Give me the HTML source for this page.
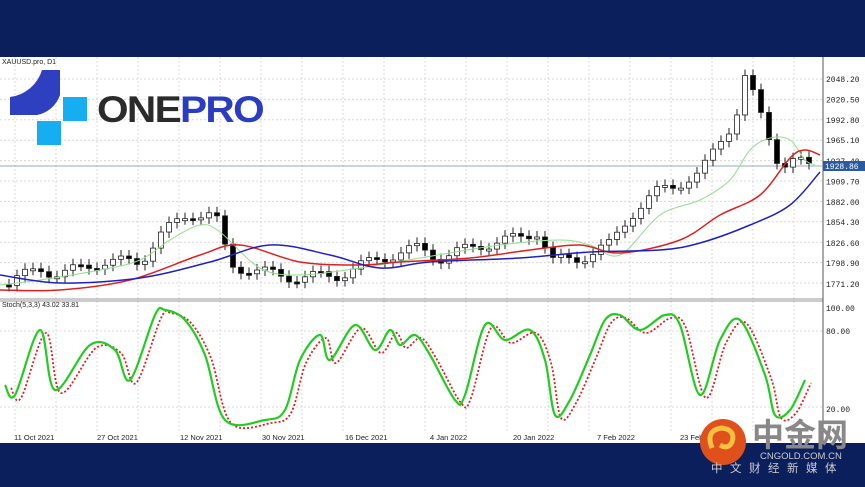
<!DOCTYPE html>
<html><head><meta charset="utf-8"><style>
body{margin:0;width:865px;height:487px;overflow:hidden;background:#0b1f5c;font-family:"Liberation Sans",sans-serif}
svg{position:absolute;left:0;top:0}
</style></head><body>
<svg id="s" width="865" height="487" viewBox="0 0 865 487">
<rect x="0" y="0" width="865" height="57" fill="#0b1f5c"/>
<rect x="0" y="57" width="865" height="386" fill="#fff"/>
<rect x="0" y="443" width="865" height="44" fill="#0b1f5c"/>
<g id="grid" stroke="#d8d8d8" stroke-dasharray="2,2" stroke-width="1"></g>
<line x1="0" y1="299" x2="823" y2="299" stroke="#999"/>
<line x1="0" y1="301" x2="823" y2="301" stroke="#999"/>
<line x1="823" y1="57" x2="823" y2="443" stroke="#555"/>
<line x1="0" y1="166" x2="823" y2="166" stroke="#9ab"/>
<text x="2" y="64" font-size="7" fill="#222">XAUUSD.pro, D1</text>
<text x="2" y="307" font-size="7" fill="#222">Stoch(5,3,3) 43.02 33.81</text>
<g id="c"></g>
<g id="axis" font-size="8" fill="#222" font-family="Liberation Mono,monospace"></g>
<rect x="823" y="161" width="42" height="10" fill="#2a5aa0"/>
<text x="825" y="169" font-size="8" fill="#fff" font-family="Liberation Mono,monospace">1928.86</text>
<g font-size="7.5" fill="#222">
<text x="14" y="440">11 Oct 2021</text><text x="97" y="440">27 Oct 2021</text><text x="180" y="440">12 Nov 2021</text><text x="262" y="440">30 Nov 2021</text><text x="345" y="440">16 Dec 2021</text><text x="430" y="440">4 Jan 2022</text><text x="513" y="440">20 Jan 2022</text><text x="597" y="440">7 Feb 2022</text><text x="680" y="440">23 Feb</text>
</g>
<!-- ONEPRO logo -->
<path d="M60 70 L60 95 A30 30 0 0 1 37 115 L10 115 L10 97 A38 38 0 0 0 42 70 Z" fill="#2e3fbf"/>
<rect x="63" y="97" width="24" height="24" fill="#16aef0"/>
<rect x="37" y="121" width="24" height="24" fill="#16aef0"/>
<text x="97" y="122" font-size="37" font-weight="bold" letter-spacing="-1.5" textLength="166" lengthAdjust="spacingAndGlyphs"><tspan fill="#2b2b2b">ONE</tspan><tspan fill="#2a3cc2">PRO</tspan></text>
<!-- cngold -->
<circle cx="723" cy="442" r="23" fill="#e0501c"/>
<path d="M712 448 Q705 430 722 428 Q736 430 732 442 Q728 450 720 445" fill="none" stroke="#f8c040" stroke-width="5"/>
<text x="752" y="446" font-size="32" font-weight="bold" fill="#888" font-family="Liberation Sans,Noto Sans CJK SC,sans-serif">中金网</text>
<text x="760" y="459" font-size="9.5" fill="#ccc">CNGOLD.COM.CN</text>
<text x="711" y="472" font-size="11.5" fill="#ccc" letter-spacing="7.5" font-family="Liberation Sans,Noto Sans CJK SC,sans-serif">中文财经新媒体</text>
</svg>
<script>
const ns="http://www.w3.org/2000/svg",S=document.getElementById('s');
function el(t,a,p){const e=document.createElementNS(ns,t);for(const k in a)e.setAttribute(k,a[k]);(p||S).appendChild(e);return e}
const g=document.getElementById('grid');
for(let x=15;x<823;x+=41)el('line',{x1:x,y1:57,x2:x,y2:432},g);
for(let y=79;y<300;y+=20.4)el('line',{x1:0,y1:y,x2:823,y2:y},g);
[331,407].forEach(y=>el('line',{x1:0,y1:y,x2:823,y2:y},g));
const ax=document.getElementById('axis');
const labs=[["2048.20",79],["2020.50",99.5],["1992.80",120],["1965.10",140],["1937.40",161],["1909.70",181.5],["1882.00",202],["1854.30",222],["1826.60",243],["1798.90",263],["1771.20",284],["100.00",308],["80.00",331],["20.00",409]];
labs.forEach(l=>{const t=el('text',{x:826,y:l[1]+3},ax);t.textContent=l[0]});
function interp(pts,x){for(let i=0;i<pts.length-1;i++){if(x>=pts[i][0]&&x<=pts[i+1][0]){const f=(x-pts[i][0])/(pts[i+1][0]-pts[i][0]);return pts[i][1]+f*(pts[i+1][1]-pts[i][1])}}return pts[pts.length-1][1]}
const price=[[5,285],[40,268],[60,275],[100,262],[140,262],[160,235],[190,213],[215,215],[230,265],[260,272],[300,278],[340,275],[380,258],[420,248],[440,258],[480,245],[520,238],[540,230],[550,262],[580,258],[610,245],[630,215],[660,190],[700,175],[720,140],[735,120],[745,78],[755,100],[770,140],[780,165],[795,160],[810,168]];
const c=document.getElementById('c');
let prev=interp(price,5);
for(let x=9;x<812;x+=8){const cl=interp(price,x)+Math.sin(x*1.7)*6;const op=prev;const top=Math.min(op,cl),bot=Math.max(op,cl);
el('line',{x1:x,y1:top-6,x2:x,y2:bot+6,stroke:'#222','stroke-width':1},c);
el('rect',{x:x-2.5,y:top,width:5,height:Math.max(2,bot-top),fill:cl<op?'#fff':'#000',stroke:'#222','stroke-width':0.8},c);prev=cl}
function smooth(pts){let d='M'+pts[0].join(',');for(let i=0;i<pts.length-1;i++){const p0=pts[Math.max(0,i-1)],p1=pts[i],p2=pts[i+1],p3=pts[Math.min(pts.length-1,i+2)];
const c1=[p1[0]+(p2[0]-p0[0])/6,p1[1]+(p2[1]-p0[1])/6],c2=[p2[0]-(p3[0]-p1[0])/6,p2[1]-(p3[1]-p1[1])/6];d+=' C'+c1.join(',')+' '+c2.join(',')+' '+p2.join(',')}return d}
function line(pts,col,w,dash,sm){el('path',{d:sm?smooth(pts):'M'+pts.map(p=>p.join(',')).join(' L'),fill:'none',stroke:col,'stroke-width':w,'stroke-dasharray':dash||'none','stroke-linejoin':'round'},c)}
line([[0,285],[40,280],[100,270],[140,260],[170,240],[200,225],[220,232],[260,268],[300,275],[360,268],[420,258],[500,245],[560,240],[590,245],[620,255],[660,215],[700,200],[730,180],[750,150],[770,138],[790,140],[805,160],[815,165]],'#8fe08f',1,null,1);
line([[0,290],[60,290],[130,280],[200,255],[240,245],[300,262],[360,265],[400,262],[470,258],[530,250],[580,245],[620,253],[680,240],[720,215],[760,195],[790,158],[805,150],[820,155]],'#e02020',1.5,null,1);
line([[0,275],[60,283],[140,278],[210,262],[270,245],[330,255],[380,268],[430,262],[520,258],[590,252],[660,250],[700,243],[750,225],[790,205],[820,172]],'#2020c0',1.5,null,1);
const st=[[5,385],[15,395],[40,330],[55,390],[90,345],[115,350],[130,380],[155,315],[165,310],[185,320],[205,355],[225,420],[265,420],[285,410],[300,360],[320,335],[330,360],[355,325],[375,350],[390,330],[400,345],[415,335],[430,355],[455,400],[465,395],[485,325],[505,340],[530,330],[545,360],[555,415],[570,400],[590,355],[605,320],[620,315],[640,330],[665,315],[680,325],[700,395],[720,340],[740,320],[765,375],[775,415],[790,410],[805,380]];
line(st.map(p=>[p[0]+6,p[1]+3]),'#e02020',1.8,'2,2',1);
line(st,'#22cc22',2.2,null,1);
</script>
</body></html>
